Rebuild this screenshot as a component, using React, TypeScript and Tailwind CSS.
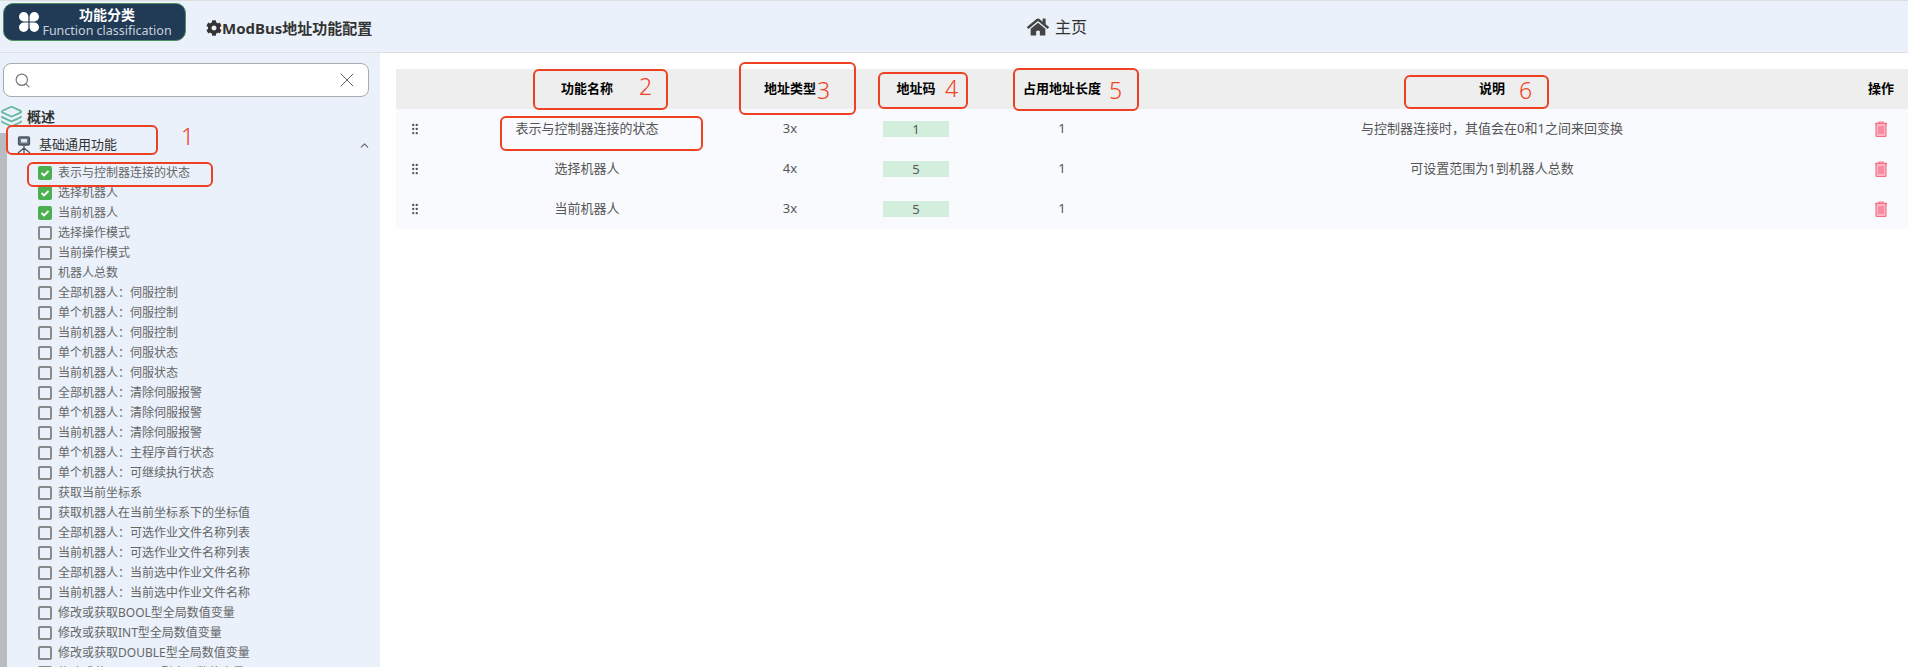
import { ChevronUp, GripVertical, Layers, Search, X } from 'lucide-react';
import { FaCog, FaHome } from 'react-icons/fa';

const fontStack = "font-['Noto_Sans','Noto_Sans_CJK_SC',sans-serif]";
const gridCols = 'grid grid-cols-[40px_302px_104px_148px_144px_720px_54px]';

const features = [
  { label: '表示与控制器连接的状态', checked: true },
  { label: '选择机器人', checked: true },
  { label: '当前机器人', checked: true },
  { label: '选择操作模式' },
  { label: '当前操作模式' },
  { label: '机器人总数' },
  { label: '全部机器人\uFF1A伺服控制' },
  { label: '单个机器人\uFF1A伺服控制' },
  { label: '当前机器人\uFF1A伺服控制' },
  { label: '单个机器人\uFF1A伺服状态' },
  { label: '当前机器人\uFF1A伺服状态' },
  { label: '全部机器人\uFF1A清除伺服报警' },
  { label: '单个机器人\uFF1A清除伺服报警' },
  { label: '当前机器人\uFF1A清除伺服报警' },
  { label: '单个机器人\uFF1A主程序首行状态' },
  { label: '单个机器人\uFF1A可继续执行状态' },
  { label: '获取当前坐标系' },
  { label: '获取机器人在当前坐标系下的坐标值' },
  { label: '全部机器人\uFF1A可选作业文件名称列表' },
  { label: '当前机器人\uFF1A可选作业文件名称列表' },
  { label: '全部机器人\uFF1A当前选中作业文件名称' },
  { label: '当前机器人\uFF1A当前选中作业文件名称' },
  { label: '修改或获取BOOL型全局数值变量' },
  { label: '修改或获取INT型全局数值变量' },
  { label: '修改或获取DOUBLE型全局数值变量' },
  { label: '修改或获取STRING型全局数值变量' },
];

const rows = [
  { name: '表示与控制器连接的状态', type: '3x', code: '1', length: '1', desc: '与控制器连接时\uFF0C其值会在0和1之间来回变换' },
  { name: '选择机器人', type: '4x', code: '5', length: '1', desc: '可设置范围为1到机器人总数' },
  { name: '当前机器人', type: '3x', code: '5', length: '1', desc: '' },
];

function PetalsIcon() {
  return (
    <svg width="20" height="20" viewBox="0 0 20 20" fill="#fff">
      <path d="M9.400 9.400H4.700A4.700 4.700 0 1 1 9.400 4.700z" />
      <path d="M10.600 9.400h4.700A4.700 4.700 0 1 0 10.600 4.700z" />
      <path d="M9.400 10.600H4.700A4.700 4.700 0 1 0 9.400 15.300z" />
      <path d="M10.600 10.600h4.700A4.700 4.700 0 1 1 10.600 15.300z" />
    </svg>
  );
}

function RobotIcon() {
  return (
    <svg width="16" height="18" viewBox="0 0 16 18" fill="none" stroke="#4a5560" strokeWidth="1.300">
      <rect x="2.500" y="1" width="11" height="8" rx="1.200" fill="#66727e" />
      <rect x="5" y="3" width="6" height="3.500" fill="#dfe6ee" stroke="none" />
      <path d="M8 9v3M8 12l-6 5M8 12l6 5M8 12v5" />
    </svg>
  );
}

function TrashIcon() {
  return (
    <svg width="14" height="16" viewBox="0 0 14 16" fill="#fbb6c4" stroke="#f4708a" strokeWidth="1.200">
      <path d="M1 2.500h12" strokeWidth="1.600" />
      <path d="M5 2.500V1h4v1.500" fill="none" />
      <path d="M2 2.500h10v12a1 1 0 0 1-1 1H3a1 1 0 0 1-1-1z" />
      <path d="M5 5v8M7 5v8M9 5v8" fill="none" />
    </svg>
  );
}

function Checkbox({ checked }: { checked?: boolean }) {
  if (checked) {
    return (
      <span className="flex h-[14px] w-[14px] shrink-0 items-center justify-center rounded-[2px] bg-[#4caf50]">
        <svg width="10" height="10" viewBox="0 0 10 10" fill="none" stroke="#fff" strokeWidth="1.800">
          <path d="M1.500 5l2.500 2.500 4.500-4.500" />
        </svg>
      </span>
    );
  }
  return <span className="h-[14px] w-[14px] shrink-0 rounded-[2px] border-2 border-[#8a8a8a]" />;
}

function Sidebar() {
  return (
    <aside className="w-[380px] shrink-0 overflow-hidden bg-[#eaf1fa]">
      <div className="ml-[3px] mt-[10px] flex h-[34px] w-[366px] items-center justify-between rounded-lg border border-[#aaa] bg-white pl-[10px] pr-[9px]">
        <Search size={17} strokeWidth={1.7} className="text-[#777]" />
        <X size={24} strokeWidth={1} className="text-[#666]" />
      </div>
      <div className="mt-[9px] flex h-[20px] items-center gap-[4px]">
        <Layers size={23} strokeWidth={1.8} className="text-[#62b79b]" />
        <span className="text-[14px] font-bold text-[#333]">概述</span>
      </div>
      <div className="mt-[7px] border-l-[7px] border-[#b8bcc0]">
        <div className="mb-[6px] flex h-[24px] items-center px-[9px]">
          <RobotIcon />
          <span className="ml-[7px] text-[13px] text-[#333]">基础通用功能</span>
          <ChevronUp size={13} className="ml-auto text-[#666]" />
        </div>
        <ul>
          {features.map((item) => (
            <li key={item.label} className="flex h-5 items-center gap-[6px] pl-[31px]">
              <Checkbox checked={item.checked} />
              <span className="text-[12px] text-[#666]">{item.label}</span>
            </li>
          ))}
        </ul>
      </div>
    </aside>
  );
}

function AddressTable() {
  return (
    <main className="flex-1 overflow-hidden bg-white pl-[16px] pt-[16px]">
      <div className={`${gridCols} h-[40px] items-center bg-[#eeeeee] text-center text-[13px] font-bold text-black`}>
        <div />
        <div>功能名称</div>
        <div>地址类型</div>
        <div>地址码</div>
        <div>占用地址长度</div>
        <div className="pr-1">说明</div>
        <div>操作</div>
      </div>
      {rows.map((row) => (
        <div key={row.name} className={`${gridCols} h-[40px] items-center bg-[#f9fafe] text-center text-[13px] text-[#555]`}>
          <div className="pl-[12px]">
            <GripVertical size={14} className="text-[#555]" />
          </div>
          <div>{row.name}</div>
          <div>{row.type}</div>
          <div className="flex justify-center">
            <span className="block h-[16px] w-[66px] bg-[#d4eedd] leading-[16px]">{row.code}</span>
          </div>
          <div>{row.length}</div>
          <div className="pr-1">{row.desc}</div>
          <div className="flex justify-center">
            <TrashIcon />
          </div>
        </div>
      ))}
    </main>
  );
}

// red markup drawn over the screenshot
function Annotations() {
  const box = 'absolute rounded-[6px] border-2 border-[#ee4123]';
  const digit = 'absolute text-[23px] font-light leading-none text-[#ee4123]';
  return (
    <>
      <div className={`${box} left-[6px] top-[125px] h-[30px] w-[152px]`} />
      <div className={`${box} left-[27px] top-[162px] h-[25px] w-[186px]`} />
      <div className={`${box} left-[533px] top-[69px] h-[41px] w-[135px]`} />
      <div className={`${box} left-[500px] top-[116px] h-[35px] w-[203px]`} />
      <div className={`${box} left-[739px] top-[62px] h-[53px] w-[117px]`} />
      <div className={`${box} left-[878px] top-[72px] h-[37px] w-[90px]`} />
      <div className={`${box} left-[1013px] top-[68px] h-[43px] w-[126px]`} />
      <div className={`${box} left-[1404px] top-[75px] h-[34px] w-[145px]`} />
      <span className={`${digit} left-[181px] top-[125px]`}>1</span>
      <span className={`${digit} left-[639px] top-[75px]`}>2</span>
      <span className={`${digit} left-[817px] top-[79px]`}>3</span>
      <span className={`${digit} left-[945px] top-[77px]`}>4</span>
      <span className={`${digit} left-[1109px] top-[79px]`}>5</span>
      <span className={`${digit} left-[1519px] top-[79px]`}>6</span>
    </>
  );
}

export default function App() {
  return (
    <div className={`${fontStack} relative flex h-[667px] flex-col overflow-hidden`}>
      <header className="flex h-[53px] shrink-0 border-y border-[#dddddd] bg-[#eaf1fa]">
        <div className="flex w-[1027px] shrink-0 items-start">
          <div className="ml-[3px] mt-[2px] flex h-[38px] w-[183px] items-center rounded-[10px] border border-[#4f8f5f] bg-[#213a56] pl-[15px]">
            <PetalsIcon />
            <div className="ml-[5px] flex w-[126px] flex-col items-center">
              <span className="text-[14px] font-bold leading-[17px] text-white">功能分类</span>
              <span className="whitespace-nowrap text-[12.500px] leading-[15px] text-[#c9d2dc]">Function classification</span>
            </div>
          </div>
          <div className="ml-[20px] mt-[16px] flex items-center text-[15px] font-bold text-[#333]">
            <FaCog size={16} />
            <span>ModBus地址功能配置</span>
          </div>
        </div>
        <div className="flex items-center">
          <FaHome size={22} className="text-[#444]" />
          <span className="ml-[6px] text-[16px] text-[#333]">主页</span>
        </div>
      </header>
      <div className="flex min-h-0 flex-1">
        <Sidebar />
        <AddressTable />
      </div>
      <Annotations />
    </div>
  );
}
